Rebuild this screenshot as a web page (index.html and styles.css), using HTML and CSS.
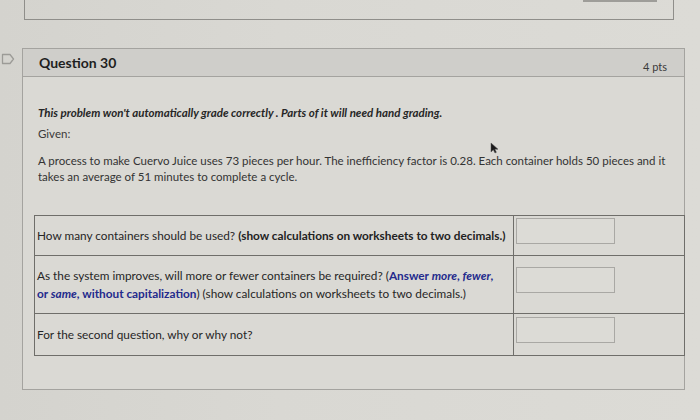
FILE: index.html
```html
<!DOCTYPE html>
<html>
<head>
<meta charset="utf-8">
<link rel="stylesheet" href="styles.css">
</head>
<body>
<div class="page">
  <div class="prev"><div class="prev-field"></div></div>
  <div class="qrow">
    <div class="gutter">
      <svg class="flag" width="14" height="12" viewBox="0 0 14 12"><path d="M1.5 1.5 H9 L12.5 6 L9 10.5 H1.5 Z" fill="none" stroke="#9c9b97" stroke-width="1.3" stroke-linejoin="round"/></svg>
    </div>
    <div class="question">
      <div class="qhead">
        <span class="qname">Question 30</span>
        <span class="pts">4 pts</span>
      </div>
      <div class="qbody">
        <p class="note">This problem won't automatically grade correctly . Parts of it will need hand grading.</p>
        <p class="given">Given:</p>
        <p class="process">A process to make Cuervo Juice uses 73 pieces per hour. The inefficiency factor is 0.28. Each container holds 50 pieces and it takes an average of 51 minutes to complete a cycle.</p>
        <table class="answers">
          <tr class="r1">
            <td class="q nowrap">How many containers should be used? <b>(show calculations on worksheets to two decimals.)</b></td>
            <td class="a"><span class="field"></span></td>
          </tr>
          <tr class="r2">
            <td class="q">As the system improves, will more or fewer containers be required? (<b class="blue">Answer <i>more</i>, <i>fewer</i>,<br>or <i>same</i>, without capitalization</b>) (show calculations on worksheets to two decimals.)</td>
            <td class="a"><span class="field"></span></td>
          </tr>
          <tr class="r3">
            <td class="q">For the second question, why or why not?</td>
            <td class="a"><span class="field"></span></td>
          </tr>
        </table>
      </div>
    </div>
  </div>
  <svg class="cursor" width="9" height="12" viewBox="0 0 9 12"><path d="M1 1 L1 10 L3.3 7.8 L5 11 L6.4 10.3 L4.8 7.2 L8 7.2 Z" fill="#1a1a1a" stroke="#555" stroke-width="0.5"/></svg>
</div>
</body>
</html>
```

FILE: styles.css
```css
html, body {
  margin: 0;
  padding: 0;
}
body {
  background: #d7d6d1;
  font-family: Lato, "Open Sans", "Liberation Sans", sans-serif;
  color: #2b2b2b;
}
.page {
  position: relative;
  width: 700px;
  height: 420px;
  overflow: hidden;
  background: linear-gradient(90deg, #d4d3ce 0%, #d9d8d3 40%, #dcdbd6 100%);
}
.prev {
  margin-left: 24px;
  width: 650px;
  height: 20px;
  border: 1px solid #8f8e8a;
  border-top: none;
  box-sizing: border-box;
  display: flex;
  justify-content: flex-end;
}
.prev-field {
  width: 74px;
  height: 2px;
  margin-right: 16px;
  background: #9e9d99;
}
.qrow {
  margin-top: 28px;
  display: flex;
}
.gutter {
  width: 22px;
  flex: none;
}
.flag {
  display: block;
  margin: 5px 0 0 1px;
}
.question {
  width: 663px;
  height: 342px;
  box-sizing: border-box;
  border: 1px solid #a4a39f;
  background: #dad9d4;
  display: flex;
  flex-direction: column;
}
.qhead {
  height: 28px;
  box-sizing: border-box;
  border-bottom: 1px solid #a4a39f;
  background: #cfceca;
  display: flex;
  align-items: center;
  justify-content: space-between;
  padding: 0 17px 0 16px;
}
.qname {
  font-weight: 700;
  font-size: 14px;
  color: #1f1f1f;
}
.pts {
  font-size: 11px;
  color: #3a3a3a;
  margin-top: 8px;
}
.qbody {
  padding: 28px 0 0 15px;
}
.qbody p {
  margin: 0;
  font-size: 11.5px;
  line-height: 16px;
}
.note {
  font-weight: 700;
  font-style: italic;
  color: #262626;
}
.given {
  margin-top: 5px !important;
  color: #3a3a3a;
}
.process {
  margin-top: 11px !important;
  width: 634px;
  color: #333;
}
.answers {
  margin: 30px 0 0 -4px;
  width: 651px;
  border-collapse: collapse;
  border: 1px solid #6f6e6a;
  font-size: 11.8px;
  line-height: 18px;
}
.answers td {
  border: 1px solid #6f6e6a;
  vertical-align: middle;
  padding: 0;
}
.answers td.q {
  width: 476px;
  padding-left: 2px;
  color: #262626;
}
.answers td.nowrap {
  white-space: nowrap;
}
.answers td.a {
  padding: 0 0 10px 2px;
}
.r1 { height: 40px; }
.r2 { height: 58px; }
.r3 { height: 42px; }
.answers b {
  font-weight: 700;
  color: #222;
}
.answers b.blue {
  color: #232a8c;
}
.field {
  display: block;
  width: 97px;
  height: 24px;
  border: 1px solid #a9a8a4;
  background: #dcdbd6;
}
.cursor {
  position: absolute;
  left: 490px;
  top: 142px;
}
```
